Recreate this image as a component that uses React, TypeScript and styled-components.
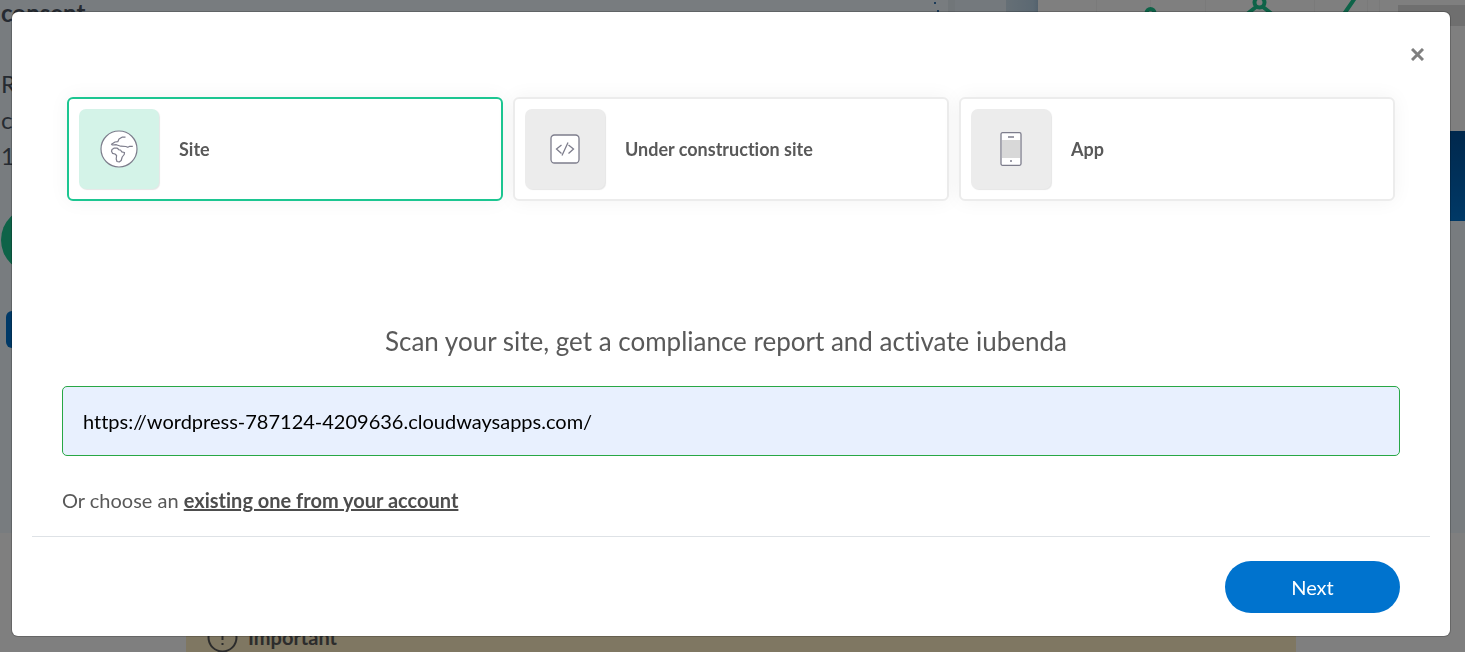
import React, { useState } from "react";
import styled, { createGlobalStyle } from "styled-components";

const GlobalStyle = createGlobalStyle`
  *, *::before, *::after { box-sizing: border-box; }
  body {
    margin: 0;
    background: #ffffff;
    color: #595959;
    font-family: "Lato", "Liberation Sans", sans-serif;
    font-size: 20px;
    font-variant-ligatures: none;
    overflow: hidden;
  }
  button, input {
    font-family: inherit;
    font-variant-ligatures: none;
  }
`;

/* ---------- page behind the dialog ---------- */

const Page = styled.div`
  height: 100vh;
  overflow: hidden;
`;

const Hero = styled.section`
  display: flex;
  justify-content: space-between;
  height: 533px;
  background: #f1f9ff;
`;

const Intro = styled.div`
  flex: 1;
  min-width: 0;
  overflow: hidden;
`;

const IntroTitle = styled.h2`
  margin: 0;
  padding-left: 1px;
  font-size: 24px;
  line-height: 26px;
  height: 66px;
  color: #4d5764;
`;

const IntroText = styled.p`
  margin: 0;
  padding-left: 1px;
  font-size: 24px;
  line-height: 36px;
  color: #4d5764;
`;

const Rating = styled.div`
  width: 66px;
  height: 66px;
  margin: 33px 0 38px 1px;
  border-radius: 50%;
  background: #1cc691;
`;

const IntroButton = styled.button`
  display: block;
  width: 160px;
  height: 37px;
  margin-left: 6px;
  border: 0;
  border-radius: 6px;
  background: #0073ce;
`;

const Preview = styled.div`
  width: 535px;
`;

const PreviewTop = styled.div`
  display: flex;
  height: 131px;
`;

const PreviewBand = styled.div`
  height: 90px;
  background: linear-gradient(#00509a, #0073ce);
`;

const Notice = styled.section`
  display: flex;
  align-items: center;
  gap: 10px;
  height: 64px;
  margin: 72px 169px 0 186px;
  padding-left: 21px;
  background: #ffeec4;
  color: #595959;
  font-weight: 700;
`;

/* ---------- dialog ---------- */

const Backdrop = styled.div`
  position: fixed;
  inset: 0;
  padding: 12px 15px 16px 12px;
  display: flex;
  background: rgba(0, 0, 0, 0.5);
`;

const Dialog = styled.div`
  flex: 1;
  display: flex;
  flex-direction: column;
  padding: 30px 20px 23px;
  border-radius: 6px;
  background: #ffffff;
  box-shadow: 0 0 0 1px rgba(0, 0, 0, 0.2);
`;

const Close = styled.button`
  align-self: flex-end;
  display: grid;
  place-items: center;
  width: 25px;
  height: 25px;
  padding: 0;
  border: 0;
  background: none;
`;

const Tabs = styled.div`
  display: grid;
  grid-template-columns: repeat(3, 1fr);
  gap: 10px;
  margin: 30px 35px 0;
`;

const Tab = styled.button<{ $active: boolean }>`
  display: flex;
  align-items: center;
  gap: 20px;
  height: 104px;
  padding: 0 10px;
  border: 2px solid ${(p) => (p.$active ? "#1cc691" : "#ececec")};
  border-radius: 6px;
  background: #ffffff;
  box-shadow: 0 0 20px rgba(0, 0, 0, 0.05);
  color: #595959;
  font-size: 18px;
  font-weight: 700;
  text-align: left;
`;

const Tile = styled.span<{ $active: boolean }>`
  display: grid;
  place-items: center;
  width: 80px;
  height: 80px;
  border-radius: 7px;
  background: ${(p) => (p.$active ? "#d4f3e8" : "#ececec")};
  box-shadow: 1px 1px 1px rgba(0, 0, 0, 0.1);
`;

const Form = styled.form`
  flex: 1;
  display: flex;
  flex-direction: column;
`;

const Title = styled.label`
  margin-top: 124px;
  padding-right: 10px;
  font-size: 26px;
  line-height: 32px;
  text-align: center;
`;

const UrlInput = styled.input`
  height: 70px;
  margin: 29px 30px 0;
  padding: 0 20px;
  border: 1px solid #28a745;
  border-radius: 5px;
  background: #e8f0fe;
  color: #000000;
  font-size: 20px;
`;

const Existing = styled.p`
  margin: 32px 30px 0;
  line-height: 24px;
`;

const ExistingLink = styled.a`
  color: #4d4d4d;
  font-weight: 700;
`;

const Footer = styled.footer`
  display: flex;
  justify-content: flex-end;
  margin-top: auto;
  padding: 24px 30px 0;
  border-top: 1px solid #dee2e6;
`;

const Next = styled.button`
  width: 175px;
  height: 52px;
  border: 0;
  border-radius: 26px;
  background: #0073ce;
  color: #ffffff;
  font-size: 20px;
`;

const GlobeIcon = () => (
  <svg width="38" height="38" viewBox="0 0 38 38" fill="none" stroke="#7d7d8c" strokeWidth="1.2" strokeLinejoin="round">
    <circle cx="19" cy="19" r="18" fill="#fff" />
    <path d="M25.500 7.200h-3.500l-3 1.800-1.200 2.700-2.800.3-3.500 2.200.8.800 4-.3 4.500 1.500 5 .3 2 .8 2-1h3" />
    <path d="M12 19.500l2.300-1.500 3 .2 1.700 1.600 1.500.2 1.300 1.800 2.700.7-.3 2-2 2.500-1 3.500-2 1.500-2.200-.5-.8-2.500.4-3.500-1.600-1.500-2.500-.7-1-2z" />
  </svg>
);

const CodeIcon = () => (
  <svg width="30" height="30" viewBox="0 0 30 30" fill="none" stroke="#7d7d8c" strokeWidth="1.300">
    <rect x="1" y="1" width="28" height="28" rx="3.500" fill="#fff" />
    <path d="M11.500 11l-5 4 5 4.500M18.500 11l5 4-5 4.500M18 8.500l-6 13" />
  </svg>
);

const PhoneIcon = () => (
  <svg width="22" height="34" viewBox="0 0 22 34" fill="none" stroke="#7d7d8c" strokeWidth="1.300">
    <rect x="1" y="0.700" width="20" height="32.600" rx="1.500" fill="#fff" />
    <path d="M2 8h18v18H2z" fill="#d8d8d8" stroke="none" />
    <path d="M8 5h6M10 29h2" />
  </svg>
);

const CloseIcon = () => (
  <svg width="13" height="13" viewBox="0 0 13 13" fill="none" stroke="#7f7f7f" strokeWidth="3">
    <path d="M1 1l11 11M12 1L1 12" />
  </svg>
);

const AlertIcon = () => (
  <svg width="31" height="31" viewBox="0 0 31 31" fill="none" stroke="#595959" strokeWidth="2">
    <circle cx="15.500" cy="15.500" r="14" />
    <path d="M15.500 8v10M15.500 21v2" />
  </svg>
);

const PreviewArt = () => (
  <svg width="535" height="131" viewBox="930 0 535 131" fill="none">
    <defs>
      <linearGradient id="fade" x1="0" x2="1">
        <stop offset="0" stopColor="#ccdfec" />
        <stop offset="0.850" stopColor="#b8d2e6" />
        <stop offset="1" stopColor="#a8c4dc" />
      </linearGradient>
    </defs>
    <path d="M934 2h2v2h-2zM937 10h2v2h-2z" fill="#3a78b4" />
    <path d="M948 0h7v131h-7z" fill="#e2ecf3" />
    <path d="M955 0h51v131h-51z" fill="#e9f3fa" />
    <path d="M1006 0h32v131h-32z" fill="url(#fade)" />
    <path d="M1038 0h427v131h-427z" fill="#fff" />
    <path d="M1096.500 0v131M1150.500 0v131M1205.500 0v131M1314.500 0v131M1367.500 0v131M1379.500 0v131" stroke="#f5f5f5" />
    <circle cx="1150.500" cy="13" r="4" stroke="#1cc691" strokeWidth="4" />
    <circle cx="1259.500" cy="2.500" r="5" stroke="#1cc691" strokeWidth="4" />
    <path d="M1247 14l9-7M1272 14l-9-7M1344 14l11-16" stroke="#1cc691" strokeWidth="4" />
    <path d="M1398 5h67v21h-67z" fill="#dedede" />
  </svg>
);

const tabs = [
  { name: "Site", Icon: GlobeIcon },
  { name: "Under construction site", Icon: CodeIcon },
  { name: "App", Icon: PhoneIcon },
];

export default function App() {
  const [active, setActive] = useState("Site");
  const [url, setUrl] = useState("https://wordpress-787124-4209636.cloudwaysapps.com/");
  return (
    <>
      <GlobalStyle />
      <Page aria-hidden="true">
        <Hero>
          <Intro>
            <IntroTitle>consent</IntroTitle>
            <IntroText>R<br />c<br />1</IntroText>
            <Rating />
            <IntroButton type="button" tabIndex={-1} />
          </Intro>
          <Preview>
            <PreviewTop><PreviewArt /></PreviewTop>
            <PreviewBand />
          </Preview>
        </Hero>
        <Notice><AlertIcon />Important</Notice>
      </Page>
      <Backdrop>
        <Dialog role="dialog" aria-modal="true">
          <Close type="button" aria-label="Close"><CloseIcon /></Close>
          <Tabs>
            {tabs.map(({ name, Icon }) => (
              <Tab key={name} type="button" aria-pressed={active === name} $active={active === name} onClick={() => setActive(name)}>
                <Tile $active={active === name}><Icon /></Tile>
                {name}
              </Tab>
            ))}
          </Tabs>
          <Form onSubmit={(e) => e.preventDefault()}>
            <Title htmlFor="site-url">Scan your site, get a compliance report and activate iubenda</Title>
            <UrlInput id="site-url" type="text" value={url} onChange={(e) => setUrl(e.target.value)} />
            <Existing>Or choose an <ExistingLink href="#existing">existing one from your account</ExistingLink></Existing>
            <Footer><Next type="submit">Next</Next></Footer>
          </Form>
        </Dialog>
      </Backdrop>
    </>
  );
}
